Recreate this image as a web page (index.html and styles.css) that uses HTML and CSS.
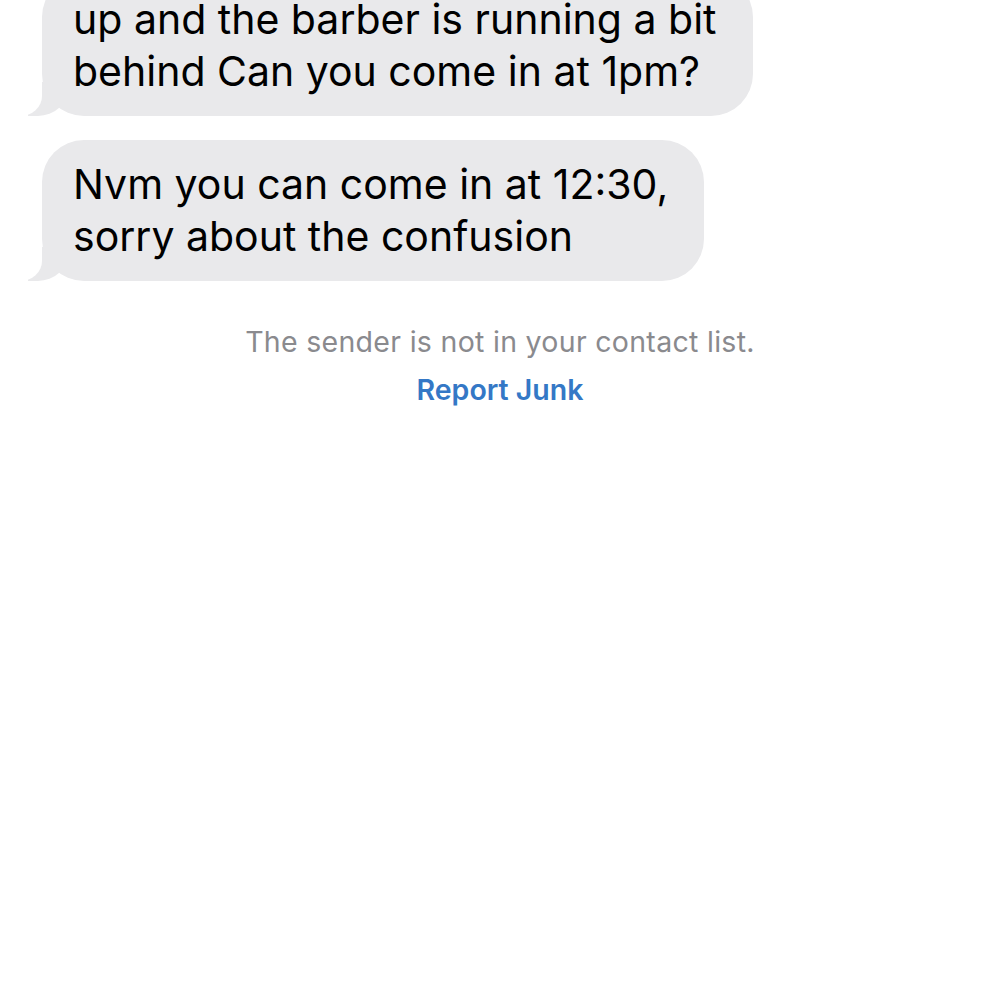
FILE: index.html
```html
<!DOCTYPE html>
<html lang="en">
<head>
    <meta charset="UTF-8">
    <meta name="viewport" content="width=device-width, initial-scale=1.0">
    <title>Messages</title>
    <link rel="stylesheet" href="styles.css">
</head>
<body>
    <div class="thread">
        <div class="bubble received first">
            up and the barber is running a bit<br>
            behind Can you come in at 1pm?
        </div>
        <div class="bubble received">
            Nvm you can come in at 12:30,<br>
            sorry about the confusion
        </div>
        <div class="notice">
            <p class="notice-text">The sender is not in your contact list.</p>
            <a class="report-link" href="#">Report Junk</a>
        </div>
    </div>
</body>
</html>
```

FILE: styles.css
```css
/* iMessage style thread */
body {
    font-family: Inter, "Noto Sans", Arial, sans-serif;
    margin: 0;
    padding: 0;
    background-color: #fff;
    color: #000;
    overflow: hidden;
}
.thread {
    display: flex;
    flex-direction: column;
    align-items: flex-start;
    padding-left: 42px;
}
.bubble {
    position: relative;
    background-color: #e9e9eb;
    border-radius: 42px;
    font-size: 41px;
    line-height: 52px;
    padding: 18px 36px 19px 31px;
    margin-bottom: 24px;
}
.bubble.first {
    margin-top: -25px;
}
/* tail */
.bubble.received::before {
    content: "";
    position: absolute;
    bottom: 0;
    left: -14px;
    width: 40px;
    height: 34px;
    background-color: #e9e9eb;
    border-bottom-right-radius: 30px 28px;
    z-index: -1;
}
.bubble.received::after {
    content: "";
    position: absolute;
    bottom: 0;
    left: -40px;
    width: 40px;
    height: 36px;
    background-color: #fff;
    border-bottom-right-radius: 22px 20px;
    z-index: -1;
}
.notice {
    align-self: stretch;
    margin-left: -42px;
    text-align: center;
    padding-top: 19px;
}
.notice-text {
    margin: 0;
    font-size: 28.5px;
    color: #8a8a8e;
    letter-spacing: 0.3px;
}
.report-link {
    display: inline-block;
    margin-top: 13px;
    font-size: 28.5px;
    font-weight: 600;
    color: #3478c6;
    text-decoration: none;
}
```
